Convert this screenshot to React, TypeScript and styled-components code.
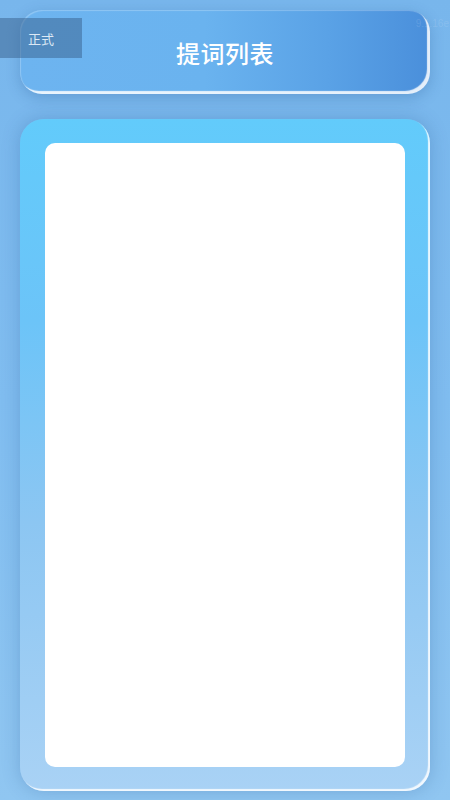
import React from "react";
import styled, { createGlobalStyle } from "styled-components";

const Global = createGlobalStyle`
  html, body { margin: 0; padding: 0; }
  body {
    font-family: "Noto Sans CJK SC", "Noto Sans", sans-serif;
    background: linear-gradient(180deg, #78b6ec 0%, #80bdf0 50%, #90c6f1 100%);
    min-height: 800px;
    overflow: hidden;
  }
`;

const Page = styled.div`
  position: relative;
  box-sizing: border-box;
  height: 800px;
  display: flex;
  flex-direction: column;
  padding: 10px 20px 9px;
  gap: 25px;
`;

const Header = styled.header`
  flex: 0 0 84px;
  border-radius: 22px;
  background: linear-gradient(90deg, #6db4f0 0%, #6ab3ef 45%, #5aa2e6 75%, #4a8fdb 100%);
  box-shadow: inset -3px -3px 1px rgba(255, 255, 255, 0.85),
    inset 1px 1px 1px rgba(255, 255, 255, 0.25),
    0 4px 14px rgba(30, 80, 140, 0.25);
  display: flex;
  align-items: center;
  justify-content: center;
`;

const Title = styled.h1`
  margin: 0;
  font-size: 24px;
  font-weight: 500;
  color: #ffffff;
  letter-spacing: 0.5px;
`;

const Badge = styled.div`
  position: absolute;
  left: 0;
  top: 18px;
  width: 82px;
  height: 40px;
  box-sizing: border-box;
  padding-left: 28px;
  display: flex;
  align-items: center;
  background: rgba(55, 95, 140, 0.5);
  color: #dbe8f5;
  font-size: 13px;
`;

const Version = styled.div`
  position: absolute;
  right: 1px;
  top: 18px;
  font-family: "Liberation Sans", sans-serif;
  font-size: 10px;
  color: rgba(255, 255, 255, 0.12);
`;

const Card = styled.main`
  flex: 1;
  border-radius: 24px;
  background: linear-gradient(180deg, #62cbfb 0%, #6cc4f8 30%, #8cc6f2 60%, #a9d2f5 100%);
  box-shadow: inset -2px -2px 1px rgba(255, 255, 255, 0.85),
    0 0 18px rgba(30, 80, 140, 0.25);
  padding: 24px 25px;
  display: flex;
  flex-direction: column;
`;

const Sheet = styled.section`
  flex: 1;
  background: #ffffff;
  border-radius: 10px;
`;

export default function App() {
  return (
    <>
      <Global />
      <Page>
        <Header>
          <Title>提词列表</Title>
        </Header>
        <Card>
          <Sheet />
        </Card>
        <Badge>正式</Badge>
        <Version>9.1.16e</Version>
      </Page>
    </>
  );
}
